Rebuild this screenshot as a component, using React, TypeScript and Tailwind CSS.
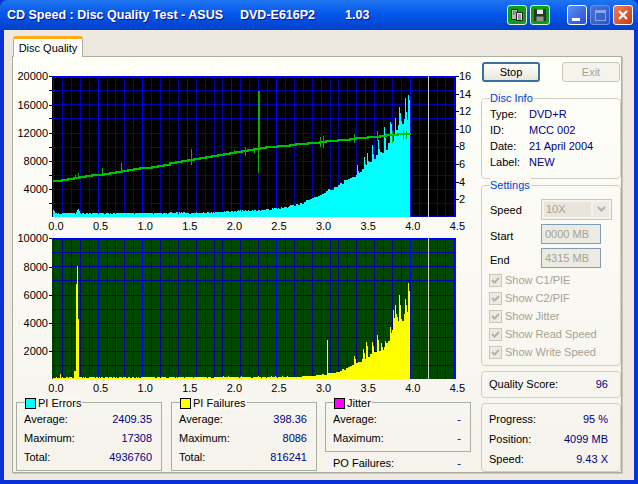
import type { ReactNode } from "react";

const xp = (v: number) => 53 + 89.2 * v;

// small seeded generator so the noise on the graphs is the same every run
function makeRand(seed: number) {
  let s = seed;
  return () => {
    s = (s * 1664525 + 1013904223) % 4294967296;
    return s / 4294967296;
  };
}

function interp(points: number[][], x: number) {
  for (let i = 1; i < points.length; i++) {
    if (x <= points[i][0]) {
      const [x0, y0] = points[i - 1];
      const [x1, y1] = points[i];
      return y0 + ((y1 - y0) * (x - x0)) / (x1 - x0);
    }
  }
  return points[points.length - 1][1];
}

const cyanBase = [[53, 3], [200, 3.5], [232, 5], [260, 6], [280, 8], [300, 12], [320, 21], [340, 31], [355, 40], [365, 47], [375, 56], [385, 64], [392, 76], [398, 88], [404, 92], [410, 105]];
const cyanSpikes: Record<number, number> = { 53: 7, 54: 6, 76: 5, 77: 7, 78: 8, 79: 6, 357: 52, 364: 60, 367: 64, 372: 72, 378: 77, 384: 90, 390: 95, 391: 93, 395: 99, 399: 110, 400: 104, 405: 119, 408: 122, 409: 117 };
const yellowBase = [[53, 1], [300, 1.5], [320, 3], [340, 7], [352, 12], [365, 20], [372, 24], [385, 30], [392, 45], [400, 55], [405, 60], [410, 80]];
const yellowSpikes: Record<number, number> = { 60: 5, 74: 8, 75: 8, 76: 95, 77: 113, 78: 60, 327: 39, 354: 23, 363: 30, 366: 37, 372: 37, 377: 44, 381: 36, 385: 38, 390: 52, 393: 69, 395: 74, 397: 62, 399: 84, 401: 60, 405: 80, 406: 74, 408: 96, 409: 88 };

function bars(base: number[][], spikes: Record<number, number>, seed: number, noise: number) {
  const r = makeRand(seed);
  const out: string[] = [];
  let held = 0;
  for (let x = 53; x < 410; x++) {
    // past x=290 the columns on the real graph are about two pixels wide
    if (x < 290 || x % 2 === 0) {
      const b = interp(base, x);
      held = b + r() * noise * (0.5 + b / 25);
    }
    let h = held;
    if (spikes[x]) h = spikes[x];
    else if (x > 340 && spikes[x - 1]) h = Math.max(h, spikes[x - 1] * 0.88);
    out.push(`M${x + 0.5} 0v${-Math.round(h)}`);
  }
  return out.join("");
}

const greenLine = (() => {
  const pts = [[53, 181], [150, 167], [258, 148], [310, 143], [350, 139], [410, 133]];
  let d = "M53 181";
  for (let x = 56; x <= 410; x += 6) {
    const y = Math.round(interp(pts, x));
    d += `H${x}V${y}`;
  }
  return d;
})();
const greenSpikes = [[75, 175, 179], [78, 173, 179], [102, 168, 174], [121, 163, 173], [191, 149, 165], [234, 150, 154], [245, 147, 156], [254, 148, 153], [258, 91, 173], [259, 91, 150], [320, 137, 147], [323, 136, 148], [354, 134, 143], [377, 131, 141], [392, 131, 143], [403, 130, 140], [406, 131, 139]];

function Plot({ top, fill, minor, major, gridRows, gridRight }: { top: number; fill: string; minor: string; major: string; gridRows: number[]; gridRight: number }) {
  const cols: number[] = [];
  for (let i = 0; i <= 45; i++) cols.push(i);
  return (
    <g shapeRendering="crispEdges">
      <rect x={52} y={top} width={404} height={141} fill={fill} />
      {gridRows.map((y) => (
        <line key={y} x1={52} x2={gridRight} y1={y + 0.5} y2={y + 0.5} stroke={minor} />
      ))}
      {cols.map((i) => {
        const x = Math.round(xp(i / 10)) + 0.5;
        return <line key={i} x1={x} x2={x} y1={top} y2={top + 141} stroke={i % 5 === 0 ? major : minor} />;
      })}
      <rect x={52} y={top} width={404} height={2} fill="#0000ff" />
    </g>
  );
}

function Charts() {
  const rows1 = [90, 104, 118, 133, 147, 161, 175, 189, 203, 216];
  const rows2 = [252, 266, 280, 295, 309, 323, 337, 351, 365];
  const xLabels = ["0.0", "0.5", "1.0", "1.5", "2.0", "2.5", "3.0", "3.5", "4.0", "4.5"];
  const left1 = [["20000", 76], ["16000", 105], ["12000", 133], ["8000", 161], ["4000", 189]] as const;
  const left2 = [["10000", 238], ["8000", 267], ["6000", 295], ["4000", 323], ["2000", 351]] as const;
  const right = [["16", 76], ["14", 94], ["12", 111], ["10", 129], ["8", 146], ["6", 164], ["4", 182], ["2", 199]] as const;
  return (
    <svg width={467} height={328} viewBox="13 68 467 328" className="block" style={{ fontFamily: "'Liberation Sans', sans-serif", fontSize: 11 }}>
      <Plot top={76} fill="#000000" minor="#0000b4" major="#0000ff" gridRows={rows1} gridRight={456} />
      <path d={bars(cyanBase, cyanSpikes, 7, 2)} transform="translate(0 217)" stroke="#00ffff" fill="none" shapeRendering="crispEdges" />
      <path d={greenLine} stroke="#00c000" strokeWidth={2} fill="none" shapeRendering="crispEdges" />
      <g shapeRendering="crispEdges" stroke="#00b400">
        {greenSpikes.map(([x, a, b], i) => (
          <line key={i} x1={x + 0.5} x2={x + 0.5} y1={a} y2={b} />
        ))}
      </g>
      <line x1={428.5} x2={428.5} y1={76} y2={217} stroke="#d0d0d0" shapeRendering="crispEdges" />
      <g shapeRendering="crispEdges" stroke="#000000">
        {left1.map(([, y]) => <line key={y} x1={49} x2={52} y1={y + 0.5} y2={y + 0.5} />)}
        {rows1.filter((_, i) => i % 2 === 0 && i < 9).map((y) => <line key={y} x1={49} x2={52} y1={y + 0.5} y2={y + 0.5} />)}
        {right.map(([, y]) => <line key={y} x1={456} x2={459} y1={y + 0.5} y2={y + 0.5} />)}
      </g>
      {left1.map(([t, y]) => <text key={t} x={48} y={y + 4} textAnchor="end" fill="#000">{t}</text>)}
      {right.map(([t, y]) => <text key={t} x={459} y={y + 4} fill="#000">{t}</text>)}
      {xLabels.map((t, i) => <text key={t} x={xp(i / 2) + 3} y={230} textAnchor="middle" fill="#000">{t}</text>)}

      <Plot top={238} fill="#004800" minor="#0000a0" major="#0000ff" gridRows={rows2} gridRight={454} />
      <path d={bars(yellowBase, yellowSpikes, 21, 2.2)} transform="translate(0 379)" stroke="#ffff00" fill="none" shapeRendering="crispEdges" />
      <line x1={428.5} x2={428.5} y1={238} y2={379} stroke="#d0d0d0" shapeRendering="crispEdges" />
      <g shapeRendering="crispEdges" stroke="#000000">
        {left2.map(([, y]) => <line key={y} x1={49} x2={52} y1={y + 0.5} y2={y + 0.5} />)}
      </g>
      {left2.map(([t, y]) => <text key={t} x={48} y={y + 4} textAnchor="end" fill="#000">{t}</text>)}
      {xLabels.map((t, i) => <text key={t} x={xp(i / 2) + 3} y={392} textAnchor="middle" fill="#000">{t}</text>)}
    </svg>
  );
}

function Group({ title, swatch, square, className, children }: { title: string; swatch?: string; square?: boolean; className: string; children: ReactNode }) {
  const border = square ? "border border-[#a8aea0]" : "border border-[#d0cfc0] rounded-[4px]";
  return (
    <div className={`relative ${border} ${className}`}>
      {title && (
        <div className={`absolute left-[8px] flex items-center gap-[2px] bg-[#f9f8f1] pr-[1px] ${swatch ? "-top-[7px] text-black" : "-top-[8px] text-[#0046d5]"}`}>
          {swatch && <span className={`w-[11px] h-[11px] border border-black ${swatch}`} />}
          {title}
        </div>
      )}
      {children}
    </div>
  );
}

function Row({ label, value, className = "" }: { label: string; value: string; className?: string }) {
  return (
    <div className={`flex justify-between ${className}`}>
      <span>{label}</span>
      <span className="text-[#000080]">{value}</span>
    </div>
  );
}

function Stat({ title, swatch, rows, className = "" }: { title: string; swatch: string; rows: string[][]; className?: string }) {
  return (
    <Group title={title} swatch={swatch} square className={`w-[146px] h-[69px] pl-[7px] pr-[9px] pt-[8px] ${className}`}>
      <div className="flex flex-col gap-[3px] leading-[16px]">
        {rows.map(([a, b]) => <Row key={a} label={a} value={b} />)}
      </div>
    </Group>
  );
}

function Check({ label }: { label: string }) {
  return (
    <div className="flex items-center gap-[3px] h-[18px] -ml-[1px] text-[#a5a294]">
      <span className="w-[13px] h-[13px] border border-[#c9c7ba] bg-[#ecebe2] flex items-center justify-center">
        <svg width="9" height="9" viewBox="0 0 9 9"><path d="M1 4l2.5 2.5L8 2" stroke="#b5b3a6" strokeWidth="2" fill="none" /></svg>
      </span>
      {label}
    </div>
  );
}

function TitleButton({ className, children }: { className: string; children: ReactNode }) {
  return <div className={`w-[20px] h-[20px] rounded-[3px] border flex items-center justify-center ${className}`}>{children}</div>;
}

export default function App() {
  return (
    <div className="w-[638px] h-[484px] overflow-hidden flex flex-col bg-[#0831d9] text-[11px] leading-[14px] text-black" style={{ fontFamily: "'Liberation Sans', sans-serif" }}>
      <div className="h-[30px] shrink-0 rounded-t-[7px] bg-gradient-to-b from-[#1f74f0] via-[#0255ea] to-[#0240c8] flex items-center pl-[7px] pr-[5px] text-white font-bold text-[12.5px] [text-shadow:1px_1px_#0f1089]">
        <span className="w-[233px] whitespace-nowrap">CD Speed : Disc Quality Test - ASUS</span>
        <span className="w-[105px] whitespace-nowrap">DVD-E616P2</span>
        <span>1.03</span>
        <div className="ml-auto flex items-center gap-[3px]">
          <TitleButton className="bg-[#0c9e14] border-[#e0f2e0]">
            <svg width="16" height="16" viewBox="0 0 16 16"><path d="M2.5 2.5h6v10h-6z" fill="#b8bcb0" stroke="#222" /><path d="M7.5 5.5h6v8h-6z" fill="#dfe2d8" stroke="#222" /><path d="M9 8h3M9 10h3M9 12h3M4 5h3M4 7h2" stroke="#555" /></svg>
          </TitleButton>
          <TitleButton className="bg-[#0c9e14] border-[#e0f2e0] mr-[14px]">
            <svg width="16" height="16" viewBox="0 0 16 16"><path d="M2 2h12v12H2z" fill="#2b332b" /><path d="M5 2.5h6v4.5H5z" fill="#e4e6de" /><path d="M4.5 9.5h7V14h-7z" fill="#8f988f" /></svg>
          </TitleButton>
          <TitleButton className="bg-gradient-to-br from-[#5f8ef2] to-[#2350cf] border-white">
            <span className="w-[8px] h-[3px] bg-white mt-[8px] -ml-[3px]" />
          </TitleButton>
          <TitleButton className="bg-gradient-to-br from-[#4a74da] to-[#2a54c2] border-[#6f8fdf]">
            <span className="w-[11px] h-[11px] border border-[#8ba6ea] border-t-[3px]" />
          </TitleButton>
          <TitleButton className="bg-gradient-to-br from-[#ee7c58] to-[#c93a17] border-white">
            <svg width="12" height="12" viewBox="0 0 12 12"><path d="M2 2l8 8M10 2l-8 8" stroke="#fff" strokeWidth="2.2" /></svg>
          </TitleButton>
        </div>
      </div>
      <div className="flex-1 mx-[4px] mb-[4px] bg-[#eee8e1] pl-[8px] pr-[12px] pt-[6px] flex flex-col">
        <div className="relative z-10 -mb-[1px] w-[70px] h-[21px] ml-[1px] bg-[#fffef8] border border-b-0 border-[#a8aea0] border-t-[3px] border-t-[#ffa915] rounded-t-[3px] flex items-center justify-center">
          Disc Quality
        </div>
        <div className="w-[610px] h-[417px] border border-[#a8aea0] bg-gradient-to-b from-[#fffffa] to-[#f5f3ec] flex pt-[11px] shadow-[1px_1px_0_#c8c6b8]">
          <div className="w-[467px] shrink-0">
            <Charts />
            <div className="flex gap-[8px] ml-[3px] mt-[6px]">
              <Stat title="PI Errors" swatch="bg-[#00ffff]" rows={[["Average:", "2409.35"], ["Maximum:", "17308"], ["Total:", "4936760"]]} />
              <Stat title="PI Failures" swatch="bg-[#ffff00]" className="ml-[1px]" rows={[["Average:", "398.36"], ["Maximum:", "8086"], ["Total:", "816241"]]} />
              <div className="w-[146px]">
                <Group title="Jitter" swatch="bg-[#ff00ff]" square className="h-[50px] pl-[7px] pr-[9px] pt-[8px]">
                  <div className="flex flex-col gap-[3px] leading-[16px]">
                    <Row label="Average:" value="-" />
                    <Row label="Maximum:" value="-" />
                  </div>
                </Group>
                <Row label="PO Failures:" value="-" className="pl-[8px] pr-[10px] pt-[3px] leading-[16px]" />
              </div>
            </div>
          </div>
          <div className="w-[140px] ml-[1px] shrink-0 flex flex-col">
            <div className="flex justify-between -mt-[6px] px-[1px]">
              <button className="w-[58px] h-[20px] rounded-[3px] border-2 border-[#3a6ea5] bg-gradient-to-b from-white to-[#e8e6dc]">Stop</button>
              <button className="w-[58px] h-[20px] rounded-[3px] border border-[#c9c7ba] text-[#a5a294] bg-[#f5f4ec]">Exit</button>
            </div>
            <Group title="Disc Info" className="h-[81px] mt-[16px] pl-[8px] pr-[4px] pt-[7px]">
              <div className="flex flex-col leading-[16px]">
                {[["Type:", "DVD+R"], ["ID:", "MCC 002"], ["Date:", "21 April 2004"], ["Label:", "NEW"]].map(([a, b]) => (
                  <div key={a} className="flex"><span className="w-[39px]">{a}</span><span className="text-[#000080]">{b}</span></div>
                ))}
              </div>
            </Group>
            <Group title="Settings" className="h-[181px] mt-[6px] pl-[8px] pr-[8px] pt-[13px]">
              <div className="flex items-center h-[21px]">
                <span className="w-[51px]">Speed</span>
                <div className="w-[71px] h-[21px] border border-[#c9c7ba] flex items-center px-[2px] gap-[2px] bg-[#f5f4ec]">
                  <span className="flex-1 h-[15px] bg-[#e9e5dc] text-[#a5a294] pl-[2px] leading-[15px]">10X</span>
                  <span className="w-[16px] h-[15px] bg-[#ece8e2] flex items-center justify-center">
                    <svg width="9" height="7" viewBox="0 0 9 7"><path d="M1 1l3.5 3.5L8 1" stroke="#b5b0a5" strokeWidth="2" fill="none" /></svg>
                  </span>
                </div>
              </div>
              {[["Start", "0000 MB"], ["End", "4315 MB"]].map(([a, b]) => (
                <div key={a} className="flex items-center h-[20px] mt-[4px] first-of-type:mt-[5px]">
                  <span className="w-[51px] pt-[3px]">{a}</span>
                  <span className="w-[60px] h-[20px] border border-[#7f9db9] bg-[#ecebe2] text-[#a5a294] pl-[3px] leading-[18px]">{b}</span>
                </div>
              ))}
              <div className="mt-[3px] flex flex-col">
                <Check label="Show C1/PIE" />
                <Check label="Show C2/PIF" />
                <Check label="Show Jitter" />
                <Check label="Show Read Speed" />
                <Check label="Show Write Speed" />
              </div>
            </Group>
            <Group title="" className="h-[27px] mt-[5px] pl-[7px] pr-[12px] pt-[5px]">
              <Row label="Quality Score:" value="96" />
            </Group>
            <Group title="" className="h-[69px] mt-[5px] pl-[7px] pr-[12px] pt-[7px]">
              <div className="flex flex-col gap-[4px] leading-[16px]">
                <Row label="Progress:" value="95 %" />
                <Row label="Position:" value="4099 MB" />
                <Row label="Speed:" value="9.43 X" />
              </div>
            </Group>
          </div>
        </div>
      </div>
    </div>
  );
}
